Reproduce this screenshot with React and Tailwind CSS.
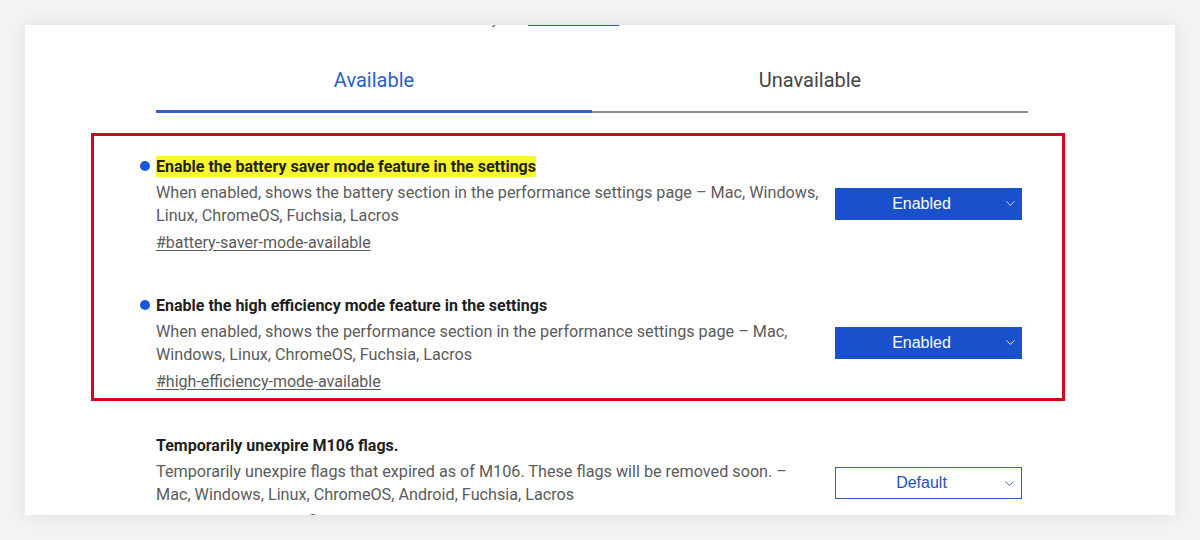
import { ChevronDown } from "lucide-react";

const flags = [
    {
        id: "battery-saver-mode-available",
        title: "Enable the battery saver mode feature in the settings",
        desc: "When enabled, shows the battery section in the performance settings page – Mac, Windows, Linux, ChromeOS, Fuchsia, Lacros",
        value: "Enabled",
        highlight: true,
        dot: true,
    },
    {
        id: "high-efficiency-mode-available",
        title: "Enable the high efficiency mode feature in the settings",
        desc: "When enabled, shows the performance section in the performance settings page – Mac, Windows, Linux, ChromeOS, Fuchsia, Lacros",
        value: "Enabled",
        dot: true,
    },
];

function Select({ value, active }) {
    return (
        <div
            className={
                active
                    ? "w-[187px] h-[32px] shrink-0 bg-[#1a50cc] text-white flex items-center relative pr-[14px]"
                    : "w-[187px] h-[32px] shrink-0 bg-white border border-[#2f5fc2] text-[#2452bd] flex items-center relative pr-[14px]"
            }
        >
            <span className="flex-1 text-center text-[16px] font-['Liberation_Sans',Arial,sans-serif]">{value}</span>
            <ChevronDown size={15} strokeWidth={1.4} className="absolute right-[4px] top-[8px]" />
        </div>
    );
}

function Flag({ flag, gapTop }) {
    return (
        <div className={gapTop}>
            <div className="flex items-center h-[22px]">
                {flag.dot && <span className="w-[10px] h-[10px] rounded-full bg-[#1a56e0] -ml-[16px] mr-[6px] shrink-0" />}
                <span className={(flag.highlight ? "bg-[#f8f82c] " : "") + "text-[16px] font-bold text-[#1f1f1f] leading-[21px]"}>
                    {flag.title}
                </span>
            </div>
            <div className="flex items-center mt-[4px]">
                <p className="w-[666px] text-[16.2px] leading-[23px] text-[#5b5b5b]">{flag.desc}</p>
                <div className="ml-auto mr-[6px]">
                    <Select value={flag.value} active={flag.value === "Enabled"} />
                </div>
            </div>
            {flag.id && (
                <a className="block mt-[5px] text-[16px] leading-[22px] text-[#5b5b5b] underline underline-offset-2">#{flag.id}</a>
            )}
        </div>
    );
}

function App() {
    return (
        <main className="w-[1200px] h-[540px] bg-[#f3f3f3] pt-[25px] px-[25px] font-['Roboto',sans-serif]">
            <div className="w-[1150px] h-[490px] bg-white overflow-hidden shadow-[0_0_18px_rgba(0,0,0,0.09)]">
                <div className="pl-[131px] w-[1003px]">
                    <p className="-mt-[17px] h-[22px] text-[15px] leading-[22px] text-[#5b5b5b] pl-[50px]">
                        Interested in cool new Chrome features? Try our{" "}
                        <a className="text-[#2a5fc0] underline text-[16px]">beta channel</a>.
                    </p>

                    <div className="flex items-end mt-[35px]">
                        <div className="flex-1 text-center text-[20px] text-[#2c5fc3] pb-[15px] border-b-[3px] border-[#2f62c4]">
                            Available
                        </div>
                        <div className="flex-1 text-center text-[20px] text-[#444] pb-[16px] border-b-2 border-[#8c8c8c]">
                            Unavailable
                        </div>
                    </div>

                    <div className="-ml-[65px] -mr-[37px] mt-[20px] border-[3px] border-[#cf0a1c] pl-[62px] pr-[34px] pt-[19px] pb-[5px]">
                        <Flag flag={flags[0]} />
                        <Flag flag={flags[1]} gapTop="mt-[40px]" />
                    </div>

                    <Flag
                        gapTop="mt-[33px]"
                        flag={{
                            title: "Temporarily unexpire M106 flags.",
                            desc: "Temporarily unexpire flags that expired as of M106. These flags will be removed soon. – Mac, Windows, Linux, ChromeOS, Android, Fuchsia, Lacros",
                            value: "Default",
                            id: "temporary-unexpire-flags-m106",
                        }}
                    />
                </div>
            </div>
        </main>
    );
}

export default App
